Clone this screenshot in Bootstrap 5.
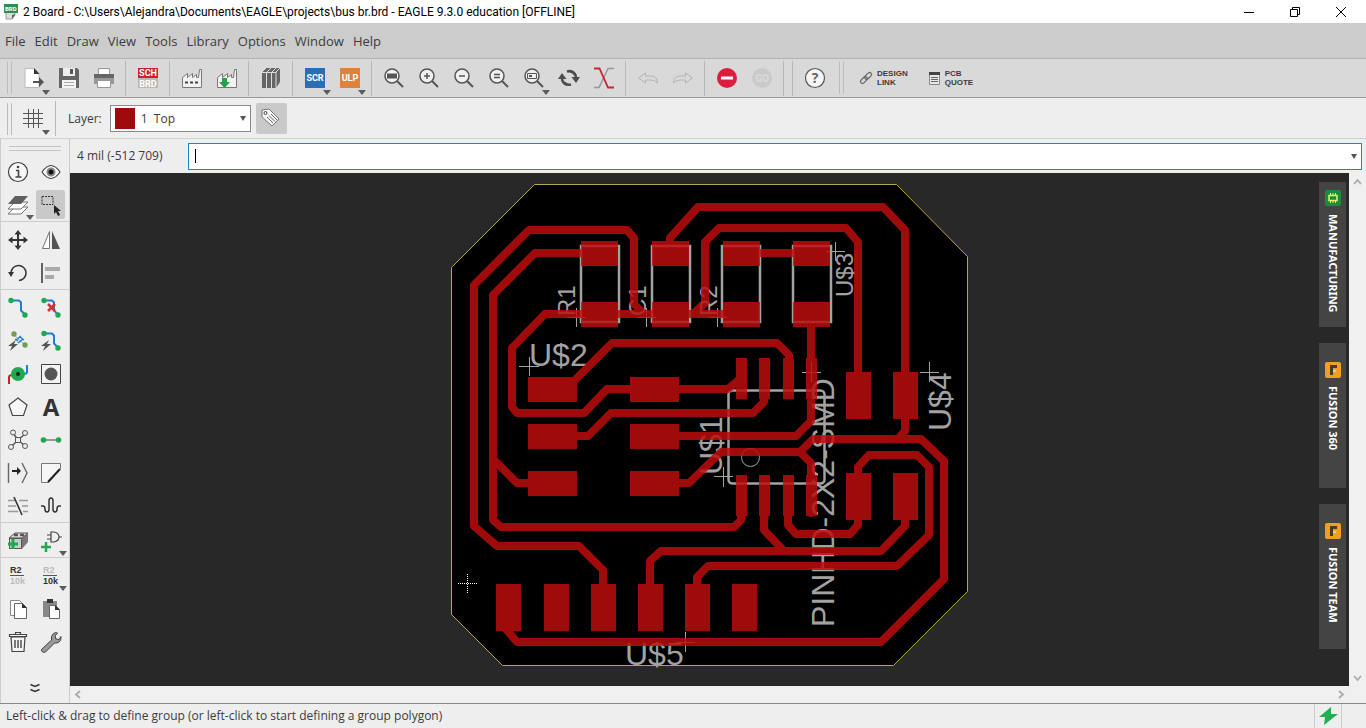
<!DOCTYPE html>
<html lang="en">
<head>
<meta charset="utf-8">
<meta name="viewport" content="width=device-width, initial-scale=1">
<title>2 Board - EAGLE 9.3.0 education</title>
<link rel="stylesheet" href="https://cdn.jsdelivr.net/npm/bootstrap@5.3.0/dist/css/bootstrap.min.css">
<style>
  body { font-family: "Open Sans", "Noto Sans", sans-serif; font-size: 12px; line-height: 16px; color: #3c3c3c; background: #eee; }
  button { border: 0; background: none; padding: 0; color: inherit; }
  svg { display: block; flex: none; overflow: visible; }

  .titlebar { height: 23px; padding-right: 2px; background: #fff; color: #000; font-family: Roboto, sans-serif; }
  .winbtn { width: 46px; height: 23px; }
  .menubar { height: 35px; background: #ccc; font-size: 13px; gap: 9px; padding: 0 5px; }
  .menubar a { color: #3c3c3c; text-decoration: none; }

  .actionbar { height: 40px; background: #d9d9d9; border-top: 1px solid #b4b4b4; border-bottom: 1px solid #999; }
  .tool { width: 35px; height: 33px; position: relative; display: flex; align-items: center; justify-content: center; flex: none; }
  .has-menu::after { content: ""; position: absolute; right: 1px; bottom: 0; border: 4px solid transparent; border-top: 5px solid #5c5c5c; border-bottom: 0; }
  .vline { width: 1px; height: 35px; background: #b8b8b8; margin: 0 4px; flex: none; }
  .grip { width: 5px; height: 32px; border: solid #bbb; border-width: 0 1px; margin: 0 4px 0 7px; flex: none; }
  .textbtn { font: bold 8px/9px "Liberation Sans", sans-serif; text-align: left; gap: 4px; display: flex; align-items: center; }

  .layerbar { height: 41px; padding-top: 1px; border-bottom: 1px solid #d2d2d2; }
  .layer-pick { width: 141px; height: 27px; position: relative; }
  .layer-pick select { width: 100%; height: 100%; appearance: none; border: 1px solid #8a8a8a; background: #fff; padding: 0 0 0 30px; color: #3c3c3c; }
  .swatch { position: absolute; left: 5px; top: 3px; width: 20px; height: 21px; background: #a00a0c; }
  .caret-down { position: absolute; right: 5px; top: 11px; border: 3px solid transparent; border-top: 5px solid #555; border-bottom: 0; pointer-events: none; }
  .tag-toggle { width: 31px; height: 31px; background: #c9c9c9; border-radius: 2px; margin-left: 5px; }

  .palette { width: 70px; border: solid #ccc; border-width: 0 1px; }
  .palette .dblline { height: 5px; border: solid #c4c4c4; border-width: 1px 0; margin: 7px 8px 4px; }
  .toolset { display: grid; grid-template-columns: 33px 33px; }
  .toolset + .toolset { border-top: 1px solid #ccc; padding-top: 1px; }
  .toolset .tool { width: 33px; }
  .toolset .has-menu::after { right: 0; bottom: 1px; }
  .picked::before { content: ""; position: absolute; inset: 2px; background: #c9c9c9; border-radius: 2px; }
  .picked svg { position: relative; }
  .more { height: 30px; }

  .cmdrow { height: 34px; padding: 0 4px 0 7px; }
  .coords { width: 111px; }
  .cmd { height: 27px; position: relative; }
  .cmd input { width: 100%; height: 100%; border: 1px solid #2b83b3; background: #fff; outline: 2px solid #e3f3fc; padding: 0 16px 0 5px; }
  .cursor { position: absolute; left: 7px; top: 6px; width: 1px; height: 14px; background: #000; }

  .board { background: #282828; position: relative; min-width: 0; min-height: 0; }
  .board > svg { width: 100%; height: 100%; position: absolute; inset: 0; }
  .sidetabs { position: absolute; right: 3px; top: 9px; gap: 16px; }
  .sidetabs button { width: 27px; height: 145px; padding-top: 19px; background: #444; color: #fff; writing-mode: vertical-rl; font: bold 11px/16px "Noto Sans", sans-serif; display: flex; align-items: center; gap: 8px; }
  .sidetabs button:first-child { padding-top: 8px; }
  .vscroll { width: 17px; padding: 5px 0 4px; background: #f0f0f0; }
  .hscroll { height: 17px; padding: 0 21px 0 4px; background: #f0f0f0; }

  .statusbar { height: 25px; border-top: 1px solid #888; padding: 0 24px 0 6px; }
  .bolt { width: 28px; height: 24px; border: solid #ccc; border-width: 0 1px; display: flex; align-items: center; justify-content: center; }
  .stk { fill: none; stroke: #555; stroke-width: 1.4; }
  .gs { fill: none; stroke: #444; stroke-width: 1; }
  .silk text { font-family: "Liberation Sans", Arial, sans-serif; font-kerning: none; fill: #a2a2a2; }
</style>
</head>
<body>
<div class="vh-100 d-flex flex-column overflow-hidden">

  <header class="titlebar d-flex align-items-center">
    <svg class="ms-1 me-1" width="15" height="17" viewBox="0 0 15 17"><path d="M2 3h9v9l-3 4H2z" fill="#ddd" stroke="#999"/><path d="M11 11v1l-3 4v-4z" fill="#666"/><rect y="1" width="14" height="9" fill="#2f8f50"/><text x="1" y="8" font-family="Roboto" font-weight="bold" font-size="6" fill="#fff">BRD</text></svg>
    <span class="text-nowrap flex-fill">2 Board - C:\Users\Alejandra\Documents\EAGLE\projects\bus br.brd - EAGLE 9.3.0 education [OFFLINE]</span>
    <button class="winbtn" aria-label="Minimize"><svg class="mx-auto" width="12" height="12"><path d="M1 6.500h10" stroke="#000"/></svg></button>
    <button class="winbtn" aria-label="Restore"><svg class="mx-auto" width="12" height="12"><path d="M3.500 3V1.500h7v7H9M1.500 3.500h7v7h-7z" fill="none" stroke="#000"/></svg></button>
    <button class="winbtn" aria-label="Close"><svg class="mx-auto" width="12" height="12"><path d="M1 1l10 10M11 1L1 11" stroke="#000"/></svg></button>
  </header>

  <nav class="menubar d-flex align-items-center">
    <a href="#">File</a><a href="#">Edit</a><a href="#">Draw</a><a href="#">View</a><a href="#">Tools</a><a href="#">Library</a><a href="#">Options</a><a href="#">Window</a><a href="#">Help</a>
  </nav>

  <div class="actionbar d-flex align-items-center">
    <span class="grip"></span>
    <button class="tool has-menu" aria-label="New"><svg width="24" height="24"><path d="M3 2.500h9l5 5v14H3z" fill="#fff" stroke="#bbb"/><path d="M12 2v6h5.500z" fill="#333"/><path d="M11 15h6v-4l5 5-5 5v-4h-6z" fill="#555"/></svg></button>
    <button class="tool" aria-label="Save"><svg width="24" height="24"><path d="M2 2h18l2 2v18H2z" fill="#666"/><path d="M6 2h12v8H6z" fill="#eee"/><path d="M13 3h3v5h-3z" fill="#555"/><path d="M5 14h14v8H5z" fill="#f4f4f4"/><path d="M7 16.500h10M7 19.500h10" stroke="#aaa"/></svg></button>
    <button class="tool" aria-label="Print"><svg width="24" height="24"><path d="M6.500 2.500h11v6h-11z" fill="#fff" stroke="#999"/><path d="M2 8h20v8H2z" fill="#666"/><path d="M2 12h20v6h-3v-3H5v3H2z" fill="#999"/><path d="M5.500 14.500h13v7h-13z" fill="#fff" stroke="#999"/></svg></button>
    <span class="vline"></span>
    <button class="tool" aria-label="Switch to schematic"><svg width="24" height="24"><path d="M2 2h20v10H2z" fill="#c8232c"/><path d="M2 12h20v10H2z" fill="#b9b9b9"/><g font-family="Roboto" font-weight="bold" font-size="9" fill="#fff" text-anchor="middle"><text x="12" y="10">SCH</text><text x="12" y="21">BRD</text></g></svg></button>
    <span class="vline"></span>
    <button class="tool" aria-label="CAM processor"><svg width="24" height="24"><path d="M2.500 21.500v-10l5-4v4l5-4v4l4-3v3h2l1-8h2v18z" fill="#f2f2f2" stroke="#777"/><path d="M5 16.500h13" stroke="#444" stroke-width="2" stroke-dasharray="3 2"/></svg></button>
    <button class="tool" aria-label="Manufacturing"><svg width="24" height="24"><path d="M2.500 21.500v-10l5-4v4l5-4v4l4-3v3h2l1-8h2v18z" fill="#f2f2f2" stroke="#777"/><path d="M7 12h5v4h3l-5.500 6L4 16h3z" fill="#21a34b"/></svg></button>
    <span class="vline"></span>
    <button class="tool" aria-label="Library manager"><svg width="24" height="24"><path d="M3 6l4-4h14v14l-4 6H3z" fill="#666"/><path d="M3 6l4-4M8 6l4-4M13 6l4-4M17 6l4-4M3 6.500h14M7.500 7v15M12.500 7v15M17 6v16" stroke="#ddd" fill="none"/></svg></button>
    <span class="vline"></span>
    <button class="tool has-menu" aria-label="Run script"><svg width="24" height="24"><path d="M2 2h20v20H2z" fill="#2a6eb8"/><text x="12" y="15" text-anchor="middle" font-family="Roboto" font-weight="bold" font-size="9" fill="#fff">SCR</text></svg></button>
    <button class="tool has-menu" aria-label="Run ULP"><svg width="24" height="24"><path d="M2 2h20v20H2z" fill="#dc843c"/><text x="12" y="15" text-anchor="middle" font-family="Roboto" font-weight="bold" font-size="9" fill="#fff">ULP</text></svg></button>
    <span class="vline"></span>
    <button class="tool" aria-label="Zoom to fit"><svg width="24" height="24"><circle cx="10" cy="10" r="7" fill="#f0f0f0" stroke="#555" stroke-width="1.500"/><path d="M15 15l6 6" stroke="#555" stroke-width="2"/><path d="M5 7.500h10v5H5z" fill="#555"/></svg></button>
    <button class="tool" aria-label="Zoom in"><svg width="24" height="24"><circle cx="10" cy="10" r="7" fill="#f0f0f0" stroke="#555" stroke-width="1.500"/><path d="M15 15l6 6" stroke="#555" stroke-width="2"/><path d="M7 10h6M10 7v6" stroke="#555" stroke-width="1.500"/></svg></button>
    <button class="tool" aria-label="Zoom out"><svg width="24" height="24"><circle cx="10" cy="10" r="7" fill="#f0f0f0" stroke="#555" stroke-width="1.500"/><path d="M15 15l6 6" stroke="#555" stroke-width="2"/><path d="M7 10h6" stroke="#555" stroke-width="1.500"/></svg></button>
    <button class="tool" aria-label="Redraw"><svg width="24" height="24"><circle cx="10" cy="10" r="7" fill="#f0f0f0" stroke="#555" stroke-width="1.500"/><path d="M15 15l6 6" stroke="#555" stroke-width="2"/><path d="M7 8.500h6M7 11.500h6" stroke="#555" stroke-width="1.500"/></svg></button>
    <button class="tool has-menu" aria-label="Zoom select"><svg width="24" height="24"><circle cx="10" cy="10" r="7" fill="#f0f0f0" stroke="#555" stroke-width="1.500"/><path d="M15 15l6 6" stroke="#555" stroke-width="2"/><path d="M5.500 7.500h9v5h-9z" fill="none" stroke="#555"/><path d="M7 9h3v2H7z" fill="#555"/></svg></button>
    <button class="tool" aria-label="Refresh"><svg width="24" height="24"><path d="M5 12q0 5 5 7M19 12q0-5-5-7M10 5.500q5-1.500 8 3M14 18.500q-4 1-7-2" fill="none" stroke="#4d4d4d" stroke-width="2.500"/><path d="M1 13l4-6 4.500 6zM14.500 11l4.500 6 4-6z" fill="#4d4d4d"/></svg></button>
    <button class="tool" aria-label="Layer swap"><svg width="24" height="24"><path d="M2 21.500h5l9-19h6" fill="none" stroke="#999" stroke-width="1.600"/><path d="M2 2.500h5.500l8.500 19h6" fill="none" stroke="#cc2430" stroke-width="1.800"/></svg></button>
    <span class="vline"></span>
    <button class="tool" aria-label="Undo" disabled><svg width="24" height="24"><path d="M2.500 12l7-5v3h5q7 0 7 7-2-3-7-3h-5v3z" fill="none" stroke="#b4b4b4"/></svg></button>
    <button class="tool" aria-label="Redo" disabled><svg width="24" height="24"><path d="M21.500 12l-7-5v3h-5q-7 0-7 7 2-3 7-3h5v3z" fill="none" stroke="#b4b4b4"/></svg></button>
    <span class="vline"></span>
    <button class="tool" aria-label="Stop"><svg width="24" height="24"><circle cx="12" cy="12" r="10" fill="#dc1e3c"/><path d="M6 12h12" stroke="#fff" stroke-width="3"/></svg></button>
    <button class="tool" aria-label="Go" disabled><svg width="24" height="24"><circle cx="12" cy="12" r="10" fill="#cacaca"/><text x="12" y="16" text-anchor="middle" font-family="Roboto" font-weight="bold" font-size="10" fill="#dadada">GO</text></svg></button>
    <span class="vline"></span>
    <span class="vline"></span>
    <button class="tool" aria-label="Help"><svg width="24" height="24"><circle cx="12" cy="12" r="9.500" fill="#f6f6f6" stroke="#555" stroke-width="1.200"/><text x="12" y="17" text-anchor="middle" font-family="Open Sans" font-weight="bold" font-size="14" fill="#666">?</text></svg></button>
    <span class="grip"></span>
    <button class="textbtn ms-2 ps-1"><svg width="13" height="14" viewBox="0 0 13 14"><g transform="rotate(-45 6 7)" fill="none" stroke="#666" stroke-width="1.200"><rect x="-1" y="5" width="8" height="4" rx="2"/><rect x="5" y="5" width="8" height="4" rx="2"/></g></svg><span>DESIGN<br>LINK</span></button>
    <button class="textbtn ms-3"><svg class="ms-1" width="13" height="14"><path d="M1.500 1.500h10v12h-10z" fill="#e8e8e8" stroke="#888"/><path d="M1 1h11v3H1z" fill="#444"/><path d="M3 6.500h7M3 8.500h7M3 10.500h7" stroke="#666"/></svg><span>PCB<br>QUOTE</span></button>
  </div>

  <div class="layerbar d-flex align-items-center">
    <span class="grip"></span>
    <button class="tool has-menu" aria-label="Grid"><svg width="24" height="24"><path d="M6.500 2v19M11.500 2v19M16.500 2v19M1 6.500h20M1 11.500h20M1 16.500h20" stroke="#555" stroke-width="1"/></svg></button>
    <span class="vline"></span>
    <label class="ms-2 me-2" for="layer">Layer:</label>
    <div class="layer-pick"><select id="layer"><option>1&nbsp; Top</option></select><span class="swatch"></span><span class="caret-down"></span></div>
    <button class="tag-toggle d-flex align-items-center justify-content-center" aria-label="Layer tags"><svg width="24" height="24"><path d="M3 3l7-1 10 10-7 7L3 10z" fill="#f4f4f4" stroke="#777"/><circle cx="6.500" cy="6" r="1.500" class="gs"/><path d="M8 10l6 6M10 8.500l6 6M12 7l6 6" stroke="#666"/></svg></button>
  </div>

  <main class="d-flex flex-fill overflow-hidden">
    <aside class="palette d-flex flex-column flex-shrink-0">
      <div class="dblline"></div>
      <div class="toolset">
        <button class="tool" aria-label="Info"><svg width="24" height="24"><circle cx="12" cy="12" r="9.500" fill="#f6f6f6" stroke="#444" stroke-width="1.200"/><path d="M10 10.500h2.500V17M9.500 17h6" fill="none" stroke="#444" stroke-width="1.600"/><circle cx="12" cy="7" r="1.300" fill="#444"/></svg></button>
        <button class="tool" aria-label="Show"><svg width="24" height="24"><path d="M3 12q9-13 18 0-9 13-18 0z" fill="#f6f6f6" stroke="#444" stroke-width="1.200"/><circle cx="12" cy="12" r="4.500" fill="#888"/><circle cx="12" cy="12" r="2.500" fill="#111"/></svg></button>
        <button class="tool has-menu" aria-label="Layer settings"><svg width="24" height="24"><path d="M9 14h13l-7 7H2z" fill="#fff" stroke="#777"/><path d="M9 9h13l-7 7H2z" fill="#fff" stroke="#777"/><path d="M9 3h13l-7 8H2z" fill="#606060"/></svg></button>
        <button class="tool picked" aria-label="Group"><svg width="24" height="24"><path d="M3 3.500h11v8H3z" fill="none" stroke="#333" stroke-dasharray="2 1"/><path d="M15 12v9l2-2 2 4 2-1-2-4h3z" fill="#222"/></svg></button>
      </div>
      <div class="toolset">
        <button class="tool" aria-label="Move"><svg width="24" height="24"><path d="M12 5v14M5 12h14" stroke="#333" stroke-width="2"/><path d="M12 2l3.500 4.500h-7zM12 22l3.500-4.500h-7zM2 12l4.500-3.500v7zM22 12l-4.500-3.500v7z" fill="#333"/></svg></button>
        <button class="tool" aria-label="Mirror"><svg width="24" height="24"><path d="M10.500 3.500v17h-7z" fill="#fff" stroke="#777"/><path d="M13 3v18h8z" fill="#555"/></svg></button>
        <button class="tool" aria-label="Rotate"><svg width="24" height="24"><path d="M5 12a7.500 7.500 0 1 1 8 7.500" fill="none" stroke="#333" stroke-width="1.500"/><path d="M2 11h6l-3 5z" fill="#333"/></svg></button>
        <button class="tool" aria-label="Align"><svg width="24" height="24"><path d="M3 2v20" stroke="#333" stroke-width="1.500"/><path d="M6 6h15v4H6zM6 14h9v4H6z" fill="#aaa"/></svg></button>
      </div>
      <div class="toolset">
        <button class="tool" aria-label="Route"><svg width="24" height="24"><path d="M5 4.500h8l2 2v8l4 4" fill="none" stroke="#1f7fd6" stroke-width="2"/><circle cx="5" cy="4.500" r="2.700" fill="#1fa850"/><circle cx="19" cy="19" r="2.700" fill="#1fa850"/></svg></button>
        <button class="tool" aria-label="Ripup"><svg width="24" height="24"><path d="M5 4.500h8l2 2v8l4 4" fill="none" stroke="#1f7fd6" stroke-width="2"/><circle cx="5" cy="4.500" r="2.700" fill="#1fa850"/><circle cx="19" cy="19" r="2.700" fill="#1fa850"/><path d="M9 8l7 7M16 8l-7 7" stroke="#e02b34" stroke-width="2.500"/></svg></button>
        <button class="tool" aria-label="Autorouter"><svg width="24" height="24"><path d="M8 6l11 10" stroke="#aaa"/><circle cx="8" cy="5" r="2.700" fill="#6f9f52"/><circle cx="19" cy="16" r="2.700" fill="#6f9f52"/><path d="M10 11l5-4M12 14l5-4M9 10l3 2M14 8l4 3" stroke="#1f7fd6" stroke-width="1.500"/><path d="M10 11l-8 6h4l-2 5 8-7H8z" fill="#555"/></svg></button>
        <button class="tool" aria-label="Quick route"><svg width="24" height="24"><path d="M5 4.500h8l2 2v8l4 4" fill="none" stroke="#1f7fd6" stroke-width="2"/><circle cx="5" cy="4.500" r="2.700" fill="#1fa850"/><circle cx="19" cy="19" r="2.700" fill="#1fa850"/><path d="M10 11l-8 6h4l-2 5 8-7H8z" fill="#555"/></svg></button>
        <button class="tool" aria-label="Via"><svg width="24" height="24"><path d="M3 22v-7q0-2 4-2" fill="none" stroke="#c8232c" stroke-width="2"/><path d="M21 3v7q0 2-4 2" fill="none" stroke="#1f7fd6" stroke-width="2"/><circle cx="12" cy="12" r="7" fill="#1fa850"/><circle cx="12" cy="12" r="2" fill="#222"/></svg></button>
        <button class="tool" aria-label="Hole"><svg width="24" height="24"><path d="M2.500 2.500h19v19h-19z" fill="#f4f4f4" stroke="#444"/><circle cx="12" cy="12" r="6.500" fill="#555"/></svg></button>
        <button class="tool" aria-label="Polygon"><svg width="24" height="24"><path d="M12 3l9 7-3.500 10.500h-11L3 10z" fill="#f6f6f6" stroke="#444" stroke-width="1.200"/></svg></button>
        <button class="tool" aria-label="Text"><svg width="24" height="24"><text x="12" y="21" text-anchor="middle" font-family="Open Sans" font-weight="bold" font-size="24" fill="#333">A</text></svg></button>
        <button class="tool" aria-label="Ratsnest"><svg width="24" height="24"><path d="M7 5l5 7 7-6M5 19l7-7 7 6" class="stk"/><g fill="#eee" stroke="#555"><circle cx="7" cy="4.500" r="2.500"/><circle cx="19" cy="5" r="2.500"/><circle cx="5" cy="19" r="2.500"/><circle cx="19" cy="18" r="2.500"/><path d="M9.500 9.500h5v5h-5z"/></g></svg></button>
        <button class="tool" aria-label="Airwire"><svg width="24" height="24"><path d="M4 12h16" stroke="#999" stroke-width="2"/><circle cx="4.500" cy="12" r="2.800" fill="#1fa850"/><circle cx="19.500" cy="12" r="2.800" fill="#1fa850"/></svg></button>
        <button class="tool" aria-label="Split"><svg width="24" height="24"><path d="M2.500 2v20M16 2l5 10-5 10" fill="none" stroke="#666" stroke-width="1.400"/><path d="M6 10h7" stroke="#222" stroke-width="2"/><path d="M11 6l4 4-4 4z" fill="#222"/></svg></button>
        <button class="tool" aria-label="Miter"><svg width="24" height="24"><path d="M2.500 21.500v-19h19v5l-12 14z" fill="#f6f6f6" stroke="#777"/><path d="M9 21l12-13" stroke="#222" stroke-width="2"/></svg></button>
        <button class="tool" aria-label="Slice"><svg width="24" height="24"><path d="M2 6.500h7M13 6.500h9M2 12h8M16 12h6M2 17.500h10M17 17.500h5" stroke="#999" stroke-width="1.400"/><path d="M8 3l8 18" stroke="#333" stroke-width="1.600"/></svg></button>
        <button class="tool" aria-label="Meander"><svg width="24" height="24"><path d="M2 12h2q2 0 2 3t2 3 2-3V7q0-3 2-3t2 3v8q0 3 2 3t2-3 2-3h2" fill="none" stroke="#333" stroke-width="1.500"/></svg></button>
      </div>
      <div class="toolset">
        <button class="tool" aria-label="Add part"><svg width="24" height="24"><path d="M3 9l6-5h13v9l-6 7H3z" fill="#777"/><path d="M3 9l6-5h13l-6 5z" fill="#ddd" stroke="#555"/><path d="M3.500 9.500h12v10h-12z" fill="#ccc" stroke="#555"/><path d="M8 6h4M14 6h4" stroke="#555" stroke-width="2.500"/><path d="M7 10v10M2 15h10" stroke="#1fa850" stroke-width="3"/></svg></button>
        <button class="tool has-menu" aria-label="Add gate"><svg width="24" height="24"><path d="M12 3h3q5 1 5 5t-5 5h-3zM8 6h4M8 10h4M20 8h3" fill="none" stroke="#444" stroke-width="1.200"/><path d="M7 13v10M2 18h10" stroke="#1fa850" stroke-width="2.500"/></svg></button>
      </div>
      <div class="toolset">
        <button class="tool" aria-label="Name"><svg width="24" height="24"><g font-family="Liberation Sans" font-weight="bold" font-size="9"><text x="4" y="9" fill="#333">R2</text><text x="4" y="20" fill="#bbb">10k</text></g><path d="M4 11.500h14" stroke="#555"/></svg></button>
        <button class="tool has-menu" aria-label="Value"><svg width="24" height="24"><g font-family="Liberation Sans" font-weight="bold" font-size="9"><text x="4" y="9" fill="#bbb">R2</text><text x="4" y="20" fill="#333">10k</text></g><path d="M4 11.500h14" stroke="#555"/></svg></button>
        <button class="tool" aria-label="Copy"><svg width="24" height="24"><path d="M4.500 3.500h9l3 3v12h-12z" fill="#fff" stroke="#888"/><path d="M8.500 6.500h8l4 4v11h-12z" fill="#fff" stroke="#666"/><path d="M16 6v5h5z" fill="#333"/></svg></button>
        <button class="tool" aria-label="Paste"><svg width="24" height="24"><path d="M4 4h14v16H4z" fill="#888"/><path d="M8 2h6v4H8z" fill="#333"/><path d="M10.500 8.500h6l4 4v9h-10z" fill="#fff" stroke="#666"/><path d="M16 8v5h5z" fill="#333"/></svg></button>
        <button class="tool" aria-label="Delete"><svg width="24" height="24"><path d="M5 7h14l-1 14.500H6zM3.500 4.500h17v2h-17zM9.500 4V2.500h5V4" fill="#f4f4f4" stroke="#444" stroke-width="1.200"/><path d="M9 10v8M12 10v8M15 10v8" stroke="#444" stroke-width="1.400"/></svg></button>
        <button class="tool" aria-label="Change"><svg width="24" height="24"><path d="M3 19L12.500 10q-1-4 2-6.500 2-1.500 4-.5L16 6l1 3 3 .5 2-3q.5 4-2 5.500-2 1.500-4.500 1L6.500 22q-2 1-3.500-.5T3 19z" fill="#999" stroke="#444"/></svg></button>
      </div>
      <button class="more mt-auto w-100 d-flex align-items-center justify-content-center" aria-label="More tools"><svg width="12" height="10"><path d="M1.500 1.500l4.500 2 4.500-2M1.500 6.500l4.500 2 4.500-2" fill="none" stroke="#333" stroke-width="1.500"/></svg></button>
    </aside>

    <div class="d-flex flex-column flex-fill">
      <div class="cmdrow d-flex align-items-center">
        <label class="coords flex-shrink-0" for="cmd">4 mil (-512 709)</label>
        <div class="cmd flex-fill"><input id="cmd" type="text"><span class="cursor"></span><span class="caret-down"></span></div>
      </div>
      <div class="d-flex flex-fill">
        <div class="board flex-fill">
          <svg viewBox="70 173 1279 513" role="img" aria-label="Board layout">
            <path d="M534.500 184.500H896.500L967.500 256.500V591.500L893.500 665.500H502.500L451.500 614.500V267.500Z" fill="#000" stroke="#b8a54a"/>
            <!-- silkscreen: part outlines, origins and names -->
            <g class="silk">
              <g fill="none" stroke="#a2a2a2" stroke-width="2.500">
                <path d="M581 246H619V322H581ZM652 246H690V322H652ZM722 246H760V322H722ZM793 246H831V322H793Z"/>
                <rect x="728.500" y="390.500" width="96" height="93" rx="4"/>
              </g>
              <g fill="none" stroke="#a2a2a2">
                <circle cx="750.500" cy="457.500" r="9"/>
                <path d="M519 366.500h20M529.500 357v19M567 317.500h19M576.500 308v19M637 317.500h19M646.500 308v19M708 317.500h19M717.500 308v19M826 251.500h19M835.500 242v19M802 372.500h19M811.500 362v20M920 372.500h19M929.500 362v20M714 476.500h19M723.500 467v20M676 642.500h19M685.500 632v20"/>
              </g>
              <text x="529" y="366" font-size="32">U$2</text>
              <text x="625" y="665" font-size="32">U$5</text>
              <text transform="translate(575 316) rotate(-90)" font-size="24">R1</text>
              <text transform="translate(646 316) rotate(-90)" font-size="24">C1</text>
              <text transform="translate(717 316) rotate(-90)" font-size="24">R2</text>
              <text transform="translate(853 297) rotate(-90)" font-size="24">U$3</text>
              <text transform="translate(951 431) rotate(-90)" font-size="32">U$4</text>
              <text transform="translate(722 475) rotate(-90)" font-size="32">U$1</text>
              <text transform="translate(834 627) rotate(-90)" font-size="32">PINHD-2X2-SMD</text>
            </g>
            <!-- top copper, slightly see-through so the silkscreen shows below it -->
            <g opacity=".84">
              <g fill="none" stroke="#be0c0e" stroke-width="8" stroke-linejoin="round" stroke-linecap="round">
                <path d="M644 314L634 304V238L627 230H529L474 285V526L497 546H579L603 570V590"/>
                <path d="M585 253H535L493 295V520L501 527H734L741 520V510M493 459L517 483H530"/>
                <path d="M725 314H545L512 348V407L517 413H584L607 389H728L741 378"/>
                <path d="M572 383L612 343H777L789 355V370M570 436H588L611 413H753L764 402V380"/>
                <path d="M660 436H796L811 421V320M670 483H689L721 452H800L811 463V513M800 452L813 439H921L944 461V579L881 642H517L506 629"/>
                <path d="M905 400V431L898 439M670 250V238L698 207H883L905 230V380"/>
                <path d="M693 314L705 303V242L719 228H846L858 242V380M750 253H800"/>
                <path d="M764 510V530L784 551M650 590V561L661 551H881L905 526V510M788 510V525L796 534H850L858 525V510"/>
                <path d="M697 590V577L708 566H897L929 535V467L917 455H869L858 467V480"/>
              </g>
              <path fill="#be0c0e" d="M581 241h37v25h-37zM652 241h37v25h-37zM723 241h37v25h-37zM793 241h37v25h-37zM581 302h37v25h-37zM652 302h37v25h-37zM723 302h37v25h-37zM793 302h37v25h-37zM528 377h49v25h-49zM528 424h49v25h-49zM528 471h49v25h-49zM630 377h49v25h-49zM630 424h49v25h-49zM630 471h49v25h-49zM496 584h25v47h-25zM544 584h25v47h-25zM591 584h25v47h-25zM638 584h25v47h-25zM685 584h25v47h-25zM732 584h25v47h-25zM846 372h25v47h-25zM893 372h25v47h-25zM846 473h25v47h-25zM893 473h25v47h-25zM736 358h11v41h-11zM759 358h11v41h-11zM783 358h11v41h-11zM806 358h11v41h-11zM736 475h11v41h-11zM759 475h11v41h-11zM783 475h11v41h-11zM806 475h11v41h-11z"/>
            </g>
            <path d="M458 583.500h19M467.500 574v19" stroke="#fff" stroke-dasharray="1 1"/>
          </svg>
          <div class="sidetabs d-flex flex-column">
            <button><svg width="16" height="16"><rect width="16" height="16" rx="2" fill="#1d8a3c"/><path d="M4 5.500h8v5H4z" fill="none" stroke="#e6f078" stroke-width="1.500"/><path d="M5.500 3v2M8 3v2M10.500 3v2M5.500 11v2M8 11v2M10.500 11v2" stroke="#e6f078"/></svg>MANUFACTURING</button>
            <button><svg width="16" height="16"><rect width="16" height="16" rx="2" fill="#f0a01e"/><path d="M5 3h7v3H8v2h3v2H8v3H5z" fill="#4a3a20"/><path d="M8 8h3v2H8z" fill="#ccc"/></svg>FUSION 360</button>
            <button><svg width="16" height="16"><rect width="16" height="16" rx="2" fill="#f0a01e"/><path d="M5 3h7v3H8v2h3v2H8v3H5z" fill="#4a3a20"/><path d="M8 8h3v2H8z" fill="#ccc"/></svg>FUSION TEAM</button>
          </div>
        </div>
        <div class="vscroll d-flex flex-column align-items-center justify-content-between">
          <svg width="9" height="8"><path d="M1 6l3.500-4L8 6" fill="none" stroke="#aaa" stroke-width="1.800"/></svg>
          <svg width="9" height="8"><path d="M1 2l3.500 4L8 2" fill="none" stroke="#aaa" stroke-width="1.800"/></svg>
        </div>
      </div>
      <div class="hscroll d-flex align-items-center justify-content-between">
        <svg width="8" height="9"><path d="M6 1L2 4.500 6 8" fill="none" stroke="#aaa" stroke-width="1.800"/></svg>
        <svg width="8" height="9"><path d="M2 1l4 3.500L2 8" fill="none" stroke="#aaa" stroke-width="1.800"/></svg>
      </div>
    </div>
  </main>

  <footer class="statusbar d-flex align-items-center justify-content-between">
    <span class="text-nowrap">Left-click &amp; drag to define group (or left-click to start defining a group polygon)</span>
    <span class="bolt"><svg width="20" height="20"><path d="M13 1L1 11h6l-1 8L20 8h-7z" fill="#1fb052"/></svg></span>
  </footer>
</div>
<script src="https://cdn.jsdelivr.net/npm/bootstrap@5.3.0/dist/js/bootstrap.bundle.min.js"></script>
</body>
</html>
